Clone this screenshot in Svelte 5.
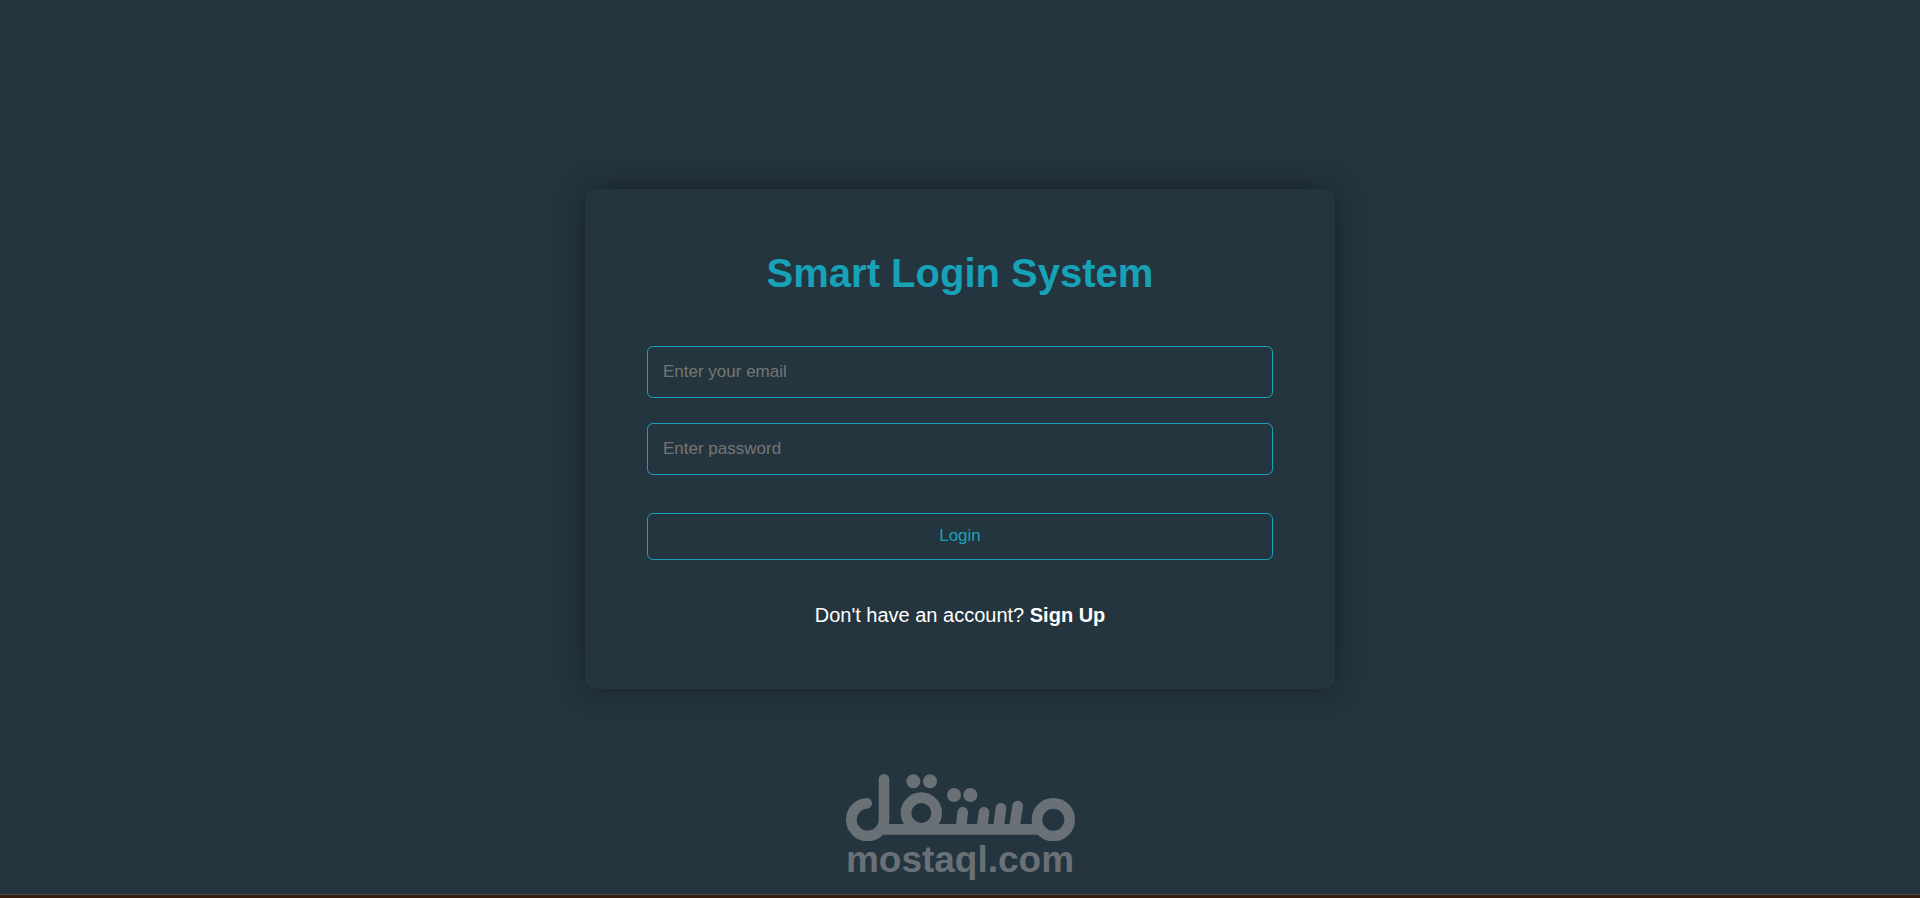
<script lang="ts">
  let email = $state('');
  let password = $state('');

  function handleSubmit(event: SubmitEvent) {
    event.preventDefault();
  }
</script>

<svelte:head>
  <title>Smart Login System</title>
</svelte:head>

<main class="page">
  <section class="card">
    <h1>Smart Login System</h1>

    <form onsubmit={handleSubmit}>
      <input type="email" bind:value={email} placeholder="Enter your email" aria-label="Email" />
      <input type="password" bind:value={password} placeholder="Enter password" aria-label="Password" />
      <button type="submit">Login</button>
    </form>

    <p class="signup">Don't have an account? <a href="#signup">Sign Up</a></p>
  </section>

  <div class="watermark">
    <svg viewBox="45 42 690 202" role="img" aria-label="مستقل">
      <g fill="none" stroke="currentColor" stroke-width="32" stroke-linecap="round">
        <!-- lam -->
        <path d="M110 130A49 49 0 1 0 162 179V58" />
        <!-- qaf -->
        <circle cx="274" cy="159" r="46" />
        <!-- teeth -->
        <path d="M398 157L393 204M462 157L456 204M513 145L505 204M563 138L553 204" />
        <!-- meem -->
        <circle cx="670" cy="179" r="49" />
        <path d="M150 208H630" stroke-linecap="butt" />
      </g>
      <g fill="currentColor">
        <circle cx="250" cy="64" r="21" />
        <circle cx="300" cy="64" r="21" />
        <circle cx="372" cy="105" r="21" />
        <circle cx="421" cy="105" r="21" />
      </g>
    </svg>
    <span>mostaql.com</span>
  </div>

  <div class="bottom-edge"></div>
</main>

<style>
  :global(body) {
    margin: 0;
    background: #24353f;
  }

  .page {
    position: relative;
    box-sizing: border-box;
    min-height: 100vh;
    padding-bottom: 20px;
    display: flex;
    align-items: center;
    justify-content: center;
    font-family: Arial, 'Liberation Sans', sans-serif;
  }

  .card {
    box-sizing: border-box;
    width: 100%;
    max-width: 750px;
    padding: 61px 62px 62px;
    border-radius: 12px;
    background: #24353f;
    box-shadow: 0 0 30px rgba(0, 0, 0, 0.4);
    text-align: center;
  }

  h1 {
    margin: 0 0 50px;
    font-size: 40px;
    line-height: 46px;
    font-weight: 700;
    color: #17a2b8;
  }

  form {
    display: flex;
    flex-direction: column;
    gap: 25px;
  }

  input,
  button {
    box-sizing: border-box;
    width: 100%;
    border: 1px solid #17a2b8;
    border-radius: 6px;
    background: transparent;
    font-family: inherit;
    font-size: 17px;
    line-height: 20px;
  }

  input {
    height: 52px;
    padding: 0 15px;
    color: #fff;
    outline: none;
  }

  input::placeholder {
    color: #757575;
  }

  button {
    height: 47px;
    margin-top: 13px;
    padding: 0 15px 2px;
    color: #17a2b8;
    cursor: pointer;
  }

  button:hover {
    background: #17a2b8;
    color: #fff;
  }

  .signup {
    margin: 44px 0 0;
    font-size: 20px;
    line-height: 23px;
    color: #fff;
  }

  .signup a {
    color: #fff;
    font-weight: 700;
    text-decoration: none;
  }

  .watermark {
    position: absolute;
    left: 0;
    right: 0;
    bottom: 20px;
    display: flex;
    flex-direction: column;
    align-items: center;
    color: #697177;
    pointer-events: none;
  }

  .watermark svg {
    width: 230px;
    display: block;
  }

  .watermark span {
    font-size: 37px;
    line-height: 37px;
    font-weight: 700;
  }

  .bottom-edge {
    position: absolute;
    left: 0;
    right: 0;
    bottom: 0;
    height: 3px;
    border-top: 1px solid #4b4643;
    background: linear-gradient(#3a2415, #33190c);
  }
</style>
